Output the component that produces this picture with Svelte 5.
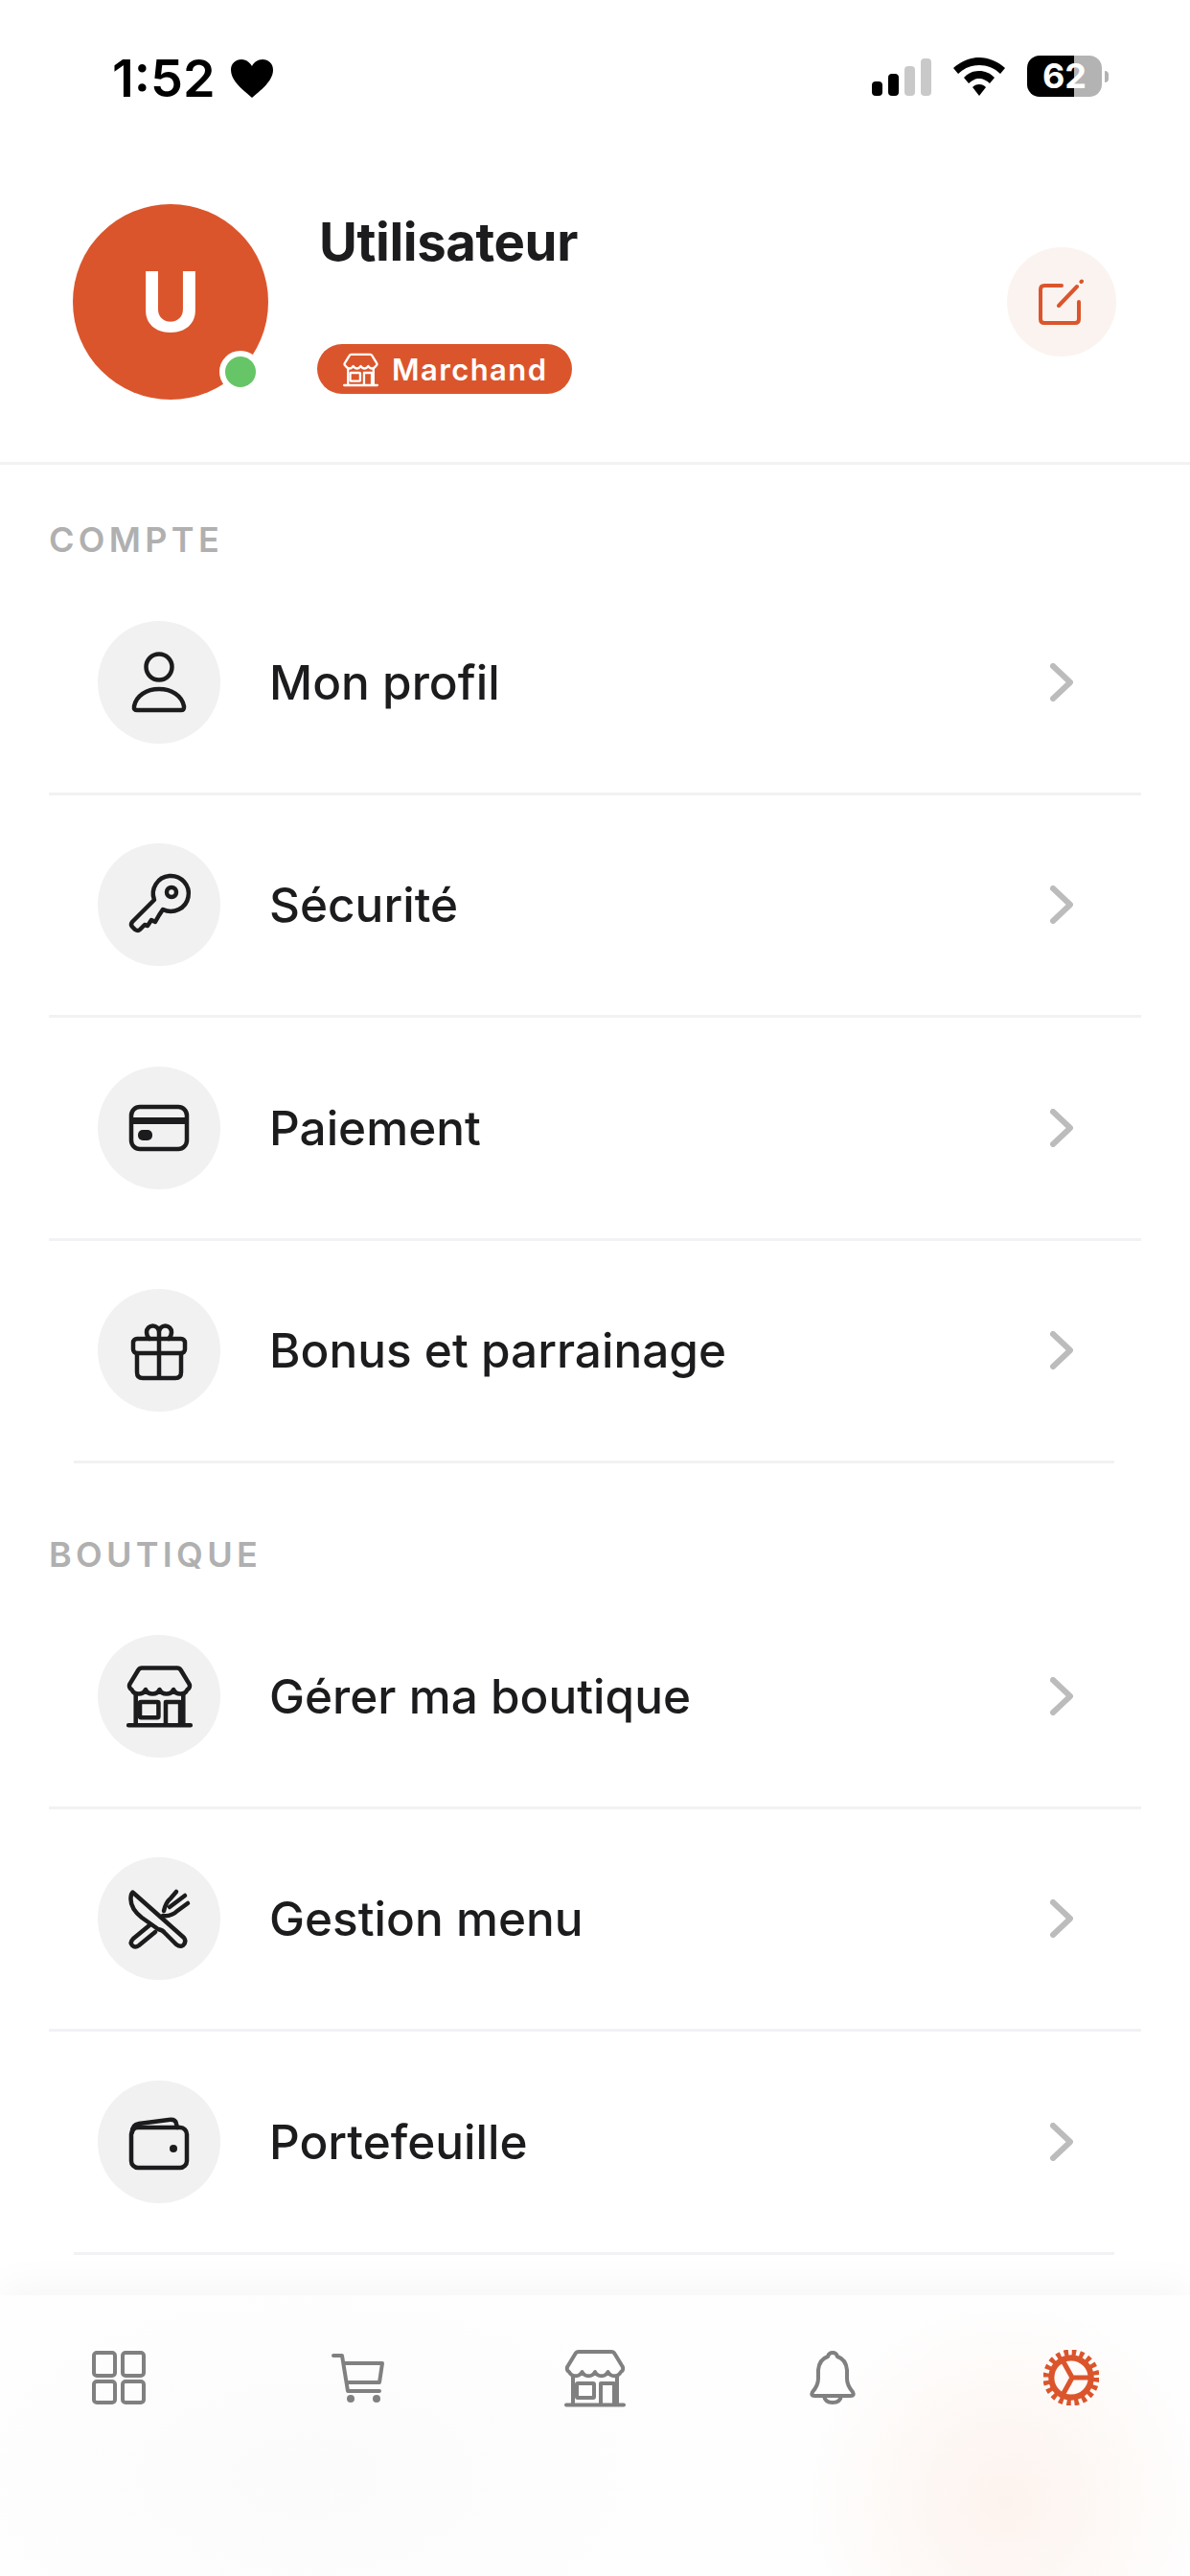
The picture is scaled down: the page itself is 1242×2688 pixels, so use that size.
<script>
  const compte = [
    { label: 'Mon profil', icon: 'person' },
    { label: 'Sécurité', icon: 'key' },
    { label: 'Paiement', icon: 'card' },
    { label: 'Bonus et parrainage', icon: 'gift' }
  ];
  const boutique = [
    { label: 'Gérer ma boutique', icon: 'store' },
    { label: 'Gestion menu', icon: 'menu' },
    { label: 'Portefeuille', icon: 'wallet' }
  ];
  const sections = [
    { title: 'COMPTE', items: compte },
    { title: 'BOUTIQUE', items: boutique }
  ];
</script>

{#snippet storeIcon()}
  <path d="M15 5H49a4 4 0 0 1 3.5 2L61 21a4 4 0 0 1-2 5a7.5 7.5 0 0 1-13.5 0a7.5 7.5 0 0 1-13.5 0a7.5 7.5 0 0 1-13.5 0a7.5 7.5 0 0 1-13.5 0a4 4 0 0 1-2-5L11.5 7A4 4 0 0 1 15 5Z" />
  <path d="M9 30V60M55 30V60M2 60.5H62M38 60V38H52V60" />
  <rect x="13" y="38" width="18" height="15" rx="1" />
{/snippet}

{#snippet rowIcon(name)}
  <svg class="icon {name}" viewBox="0 0 64 64">
    {#if name === 'person'}
      <ellipse cx="32" cy="16" rx="13.500" ry="13.500" />
      <path d="M6 57C8 46 19 39 32 39C45 39 56 46 58 57C58.500 60 57 61 55 61H9C7 61 5.500 60 6 57Z" />
    {:else if name === 'key'}
      <path d="M27 27L4 50Q2 53 4 55L7 58Q10 60 12 58L17 53L20 54L24 48L28 50L32 43L36 37A18.5 18.5 0 1 0 27 27Z" />
      <circle cx="45" cy="19" r="5" />
    {:else if name === 'card'}
      <rect x="3" y="10" width="58" height="44" rx="9" />
      <rect class="solid" x="3" y="21" width="58" height="7" />
      <rect class="solid" x="10" y="34" width="15" height="11" rx="5" />
    {:else if name === 'gift'}
      <rect x="5" y="20" width="54" height="15" rx="4" />
      <path d="M9 35V55Q9 61 15 61H49Q55 61 55 55V35M32 20V61" />
      <path d="M32 20V13A6.5 6.5 0 0 0 19 13Q19 17 22 20M32 13A6.5 6.5 0 0 1 45 13Q45 17 42 20" />
    {:else if name === 'store'}
      {@render storeIcon()}
    {:else if name === 'menu'}
      <path d="M5 5L58 52Q61 56 57 60Q54 62 50 59L38 47Q36 44 31 43L14 31Q0 20 3 7Q4 4 5 5Z" />
      <path d="M22 39L5 53Q1 57 4 60Q7 63 11 60L28 46" />
      <path d="M37 24Q39 15 44 11L50 4M43 20L59 8M36 29Q45 30 51 24L62 16" />
    {:else if name === 'wallet'}
      <rect x="3" y="17" width="58" height="42" rx="7" />
      <path d="M4 22Q4 14 11 13L42 9Q49 8 50 13L51 17" />
      <circle class="solid" cx="47" cy="39" r="4" />
    {/if}
  </svg>
{/snippet}

<div class="screen">
  <div class="status">
    <div class="time">
      <span>1:52</span>
      <svg class="heart" viewBox="0 0 44 40"><path d="M22 40C14 33 0 23 0 11C0 4 5 0 11 0C16 0 20 3 22 7C24 3 28 0 33 0C39 0 44 4 44 11C44 23 30 33 22 40Z" /></svg>
    </div>
    <div class="indicators">
      <div class="signal">
        <i class="on b1"></i><i class="on b2"></i><i class="b3"></i><i class="b4"></i>
      </div>
      <svg class="wifi" viewBox="0 0 54 40">
        <path d="M27 0C37 0 46 4 54 11L49 17C43 11 35 8 27 8C19 8 11 11 5 17L0 11C8 4 17 0 27 0Z" />
        <path d="M27 14C33 14 38 16 43 21L38 27C35 24 31 22 27 22C23 22 19 24 16 27L11 21C16 16 21 14 27 14Z" />
        <path d="M27 28C30 28 32 29 34 31L27 40L20 31C22 29 24 28 27 28Z" />
      </svg>
      <div class="battery">
        <div class="cell">62</div>
        <div class="cap"></div>
      </div>
    </div>
  </div>

  <header class="profile">
    <div class="avatar">
      U
      <span class="online"></span>
    </div>
    <div class="who">
      <div class="name">Utilisateur</div>
      <div class="badge">
        <svg class="badge-icon" viewBox="0 0 64 64">{@render storeIcon()}</svg>
        Marchand
      </div>
    </div>
    <button class="edit" aria-label="Modifier">
      <svg viewBox="0 0 48 48">
        <path d="M24 7H6Q2 7 2 11V42Q2 46 6 46H38Q42 46 42 42V24" />
        <path d="M21 28L40 8M45 2.500L44.500 3" />
      </svg>
    </button>
  </header>

  <main class="content">
    {#each sections as section}
      <section>
        <h2>{section.title}</h2>
        {#each section.items as item, i}
          <div class="row">
            <div class="bubble">{@render rowIcon(item.icon)}</div>
            <span class="label">{item.label}</span>
            <svg class="chevron" viewBox="0 0 24 40"><path d="M3 3L21 20L3 37" /></svg>
          </div>
          <div class="sep" class:inset={i === section.items.length - 1}></div>
        {/each}
      </section>
    {/each}
  </main>

  <nav class="tabs">
    <div class="tab">
      <svg class="tab-icon" viewBox="0 0 56 56">
        <rect x="2" y="2" width="22" height="24" rx="3" />
        <rect x="32" y="2" width="22" height="24" rx="3" />
        <rect x="2" y="32" width="22" height="22" rx="3" />
        <rect x="32" y="32" width="22" height="22" rx="3" />
      </svg>
    </div>
    <div class="tab">
      <svg class="tab-icon" viewBox="0 0 56 56">
        <path d="M3 5H12L18 42H51M14 13H54L51 33H17" />
        <circle class="tab-solid" cx="21" cy="50" r="4" />
        <circle class="tab-solid" cx="48" cy="50" r="4" />
      </svg>
    </div>
    <div class="tab">
      <svg class="tab-icon store" viewBox="0 0 64 64">{@render storeIcon()}</svg>
    </div>
    <div class="tab">
      <svg class="tab-icon" viewBox="0 0 48 56">
        <path d="M24 2Q28 2 29 6Q38 9 39 20V29Q39 36 45 43Q47 47 43 47H5Q1 47 3 43Q9 36 9 29V20Q10 9 19 6Q20 2 24 2Z" />
        <path d="M15 47Q16 54 24 54Q32 54 33 47" />
      </svg>
    </div>
    <div class="tab">
      <svg class="gear" viewBox="0 0 56 56">
        <circle class="teeth" cx="28" cy="28" r="25" />
        <circle class="ring" cx="28" cy="28" r="20" />
        <path class="spokes" d="M29 28H48M29 28L19 10M29 28L19 46" />
      </svg>
    </div>
  </nav>
</div>

<style>
  :global(body) {
    background: #fff;
  }
  .screen {
    width: 1242px;
    height: 2688px;
    display: flex;
    flex-direction: column;
    overflow: hidden;
    background: #fff;
    color: #1c1c1e;
    font-family: Inter, "Liberation Sans", sans-serif;
  }

  .status {
    height: 125px;
    flex: none;
    box-sizing: border-box;
    padding: 58px 85px 0 117px;
    display: flex;
    justify-content: space-between;
    align-items: flex-start;
  }
  .time {
    display: flex;
    align-items: center;
    gap: 16px;
    color: #000;
    font-size: 54px;
    font-weight: 600;
    line-height: 48px;
  }
  .heart {
    width: 44px;
    height: 40px;
  }
  .indicators {
    display: flex;
    align-items: center;
    gap: 23px;
  }
  .signal {
    display: flex;
    align-items: flex-end;
    gap: 6px;
    height: 40px;
  }
  .signal i {
    width: 11px;
    border-radius: 4px;
    background: #c9c9c9;
  }
  .signal .on {
    background: #000;
  }
  .b1 { height: 15px; }
  .b2 { height: 23px; }
  .b3 { height: 31px; }
  .b4 { height: 39px; }
  .wifi {
    width: 54px;
    height: 40px;
  }
  .battery {
    display: flex;
    align-items: center;
    gap: 3px;
  }
  .cell {
    width: 78px;
    height: 43px;
    border-radius: 13px;
    background: linear-gradient(to right, #000 49px, #b3b3b3 49px);
    color: #fff;
    font-size: 36px;
    font-weight: 700;
    line-height: 43px;
    text-align: center;
  }
  .cap {
    width: 4px;
    height: 12px;
    border-radius: 0 4px 4px 0;
    background: #b3b3b3;
  }

  .profile {
    flex: none;
    height: 360px;
    box-sizing: border-box;
    padding: 88px 77px 0 76px;
    border-bottom: 3px solid #f2f2f4;
    display: flex;
    align-items: flex-start;
  }
  .avatar {
    position: relative;
    width: 204px;
    height: 204px;
    flex: none;
    border-radius: 50%;
    background: #db552c;
    color: #fff;
    font-size: 86px;
    font-weight: 700;
    display: flex;
    align-items: center;
    justify-content: center;
  }
  .online {
    position: absolute;
    left: 153px;
    top: 153px;
    width: 32px;
    height: 32px;
    border: 6px solid #fff;
    border-radius: 50%;
    background: #66c566;
  }
  .who {
    margin-left: 51px;
    margin-top: 8px;
    flex: 1;
  }
  .name {
    font-size: 54.500px;
    font-weight: 700;
    line-height: 63px;
    letter-spacing: -0.4px;
    margin-left: 2px;
  }
  .badge {
    margin-top: 75px;
    width: 266px;
    height: 52px;
    box-sizing: border-box;
    padding-left: 27px;
    border-radius: 26px;
    background: #db552c;
    color: #fff;
    display: flex;
    align-items: center;
    gap: 14px;
    font-size: 31px;
    font-weight: 600;
    letter-spacing: 1.4px;
  }
  .badge-icon {
    width: 37px;
    height: 37px;
    fill: none;
    stroke: #fff;
    stroke-width: 4;
    stroke-linecap: round;
    stroke-linejoin: round;
  }
  .edit {
    width: 114px;
    height: 114px;
    flex: none;
    margin-top: 45px;
    padding: 0;
    border: 0;
    border-radius: 50%;
    background: #fbf3f0;
    display: flex;
    align-items: center;
    justify-content: center;
  }
  .edit svg {
    width: 48px;
    height: 48px;
    fill: none;
    stroke: #db552c;
    stroke-width: 4;
    stroke-linecap: round;
    stroke-linejoin: round;
  }

  .content {
    flex: 1;
    min-height: 0;
    overflow: hidden;
    padding: 0 51px;
  }
  section + section {
    margin-top: 17px;
  }
  h2 {
    margin: 0;
    padding-top: 58px;
    padding-bottom: 14px;
    color: #b0b0b0;
    font-size: 36px;
    font-weight: 600;
    line-height: 40px;
    letter-spacing: 4.300px;
  }
  section + section h2 {
    padding-top: 58px;
    padding-bottom: 13px;
  }
  .row {
    height: 229.500px;
    box-sizing: border-box;
    padding: 0 71px 0 51px;
    display: flex;
    align-items: center;
    gap: 51px;
  }
  .bubble {
    width: 128px;
    height: 128px;
    flex: none;
    border-radius: 50%;
    background: #f1f1f1;
    display: flex;
    align-items: center;
    justify-content: center;
  }
  .icon {
    width: 64px;
    height: 64px;
    fill: none;
    stroke: #1c1c1e;
    stroke-width: 4.500;
    stroke-linecap: round;
    stroke-linejoin: round;
    overflow: visible;
  }
  .icon.store {
    width: 69px;
    height: 69px;
    stroke-width: 4.200;
  }
  .icon .solid {
    fill: #1c1c1e;
    stroke: none;
  }
  .label {
    flex: 1;
    font-size: 49.500px;
    font-weight: 500;
  }
  .chevron {
    width: 24px;
    height: 40px;
    fill: none;
    stroke: #bcbcbc;
    stroke-width: 6;
    stroke-linecap: round;
    stroke-linejoin: round;
  }
  .sep {
    height: 3px;
    background: #f2f2f5;
  }
  .sep.inset {
    margin: 0 28px 0 26px;
  }

  .tabs {
    flex: none;
    height: 293px;
    box-sizing: border-box;
    padding-top: 54px;
    display: grid;
    grid-template-columns: repeat(5, 1fr);
    align-items: start;
    justify-items: center;
    position: relative;
    background:
      radial-gradient(circle 210px at 1050px 215px, #fdf3ee, rgba(255, 255, 255, 0)),
      radial-gradient(ellipse 400px 230px at 320px 190px, #fbfbfc, rgba(255, 255, 255, 0)),
      #fefefe;
    box-shadow: 0 -8px 40px rgba(0, 0, 0, 0.045);
  }
  .tab {
    height: 64px;
    display: flex;
    align-items: center;
    justify-content: center;
  }
  .tab-icon {
    height: 56px;
    width: 56px;
    fill: none;
    stroke: #808080;
    stroke-width: 4;
    stroke-linecap: round;
    stroke-linejoin: round;
    overflow: visible;
  }
  .tab-icon.store {
    width: 64px;
    height: 64px;
    stroke-width: 4;
  }
  .tab-solid {
    fill: #808080;
    stroke: none;
  }
  .gear {
    width: 58px;
    height: 58px;
    fill: none;
    stroke: #db552c;
  }
  .teeth {
    stroke-width: 7;
    stroke-dasharray: 4.300 3.550;
  }
  .ring {
    stroke-width: 6;
  }
  .spokes {
    stroke-width: 5;
  }
</style>
